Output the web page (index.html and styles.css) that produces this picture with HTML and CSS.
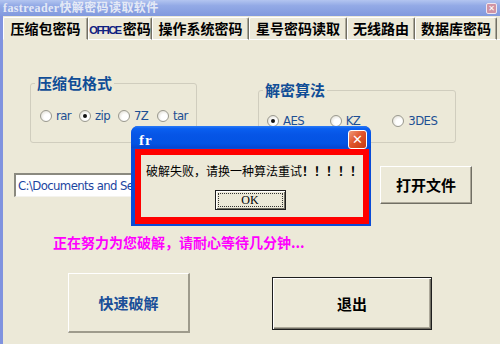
FILE: index.html
```html
<!DOCTYPE html>
<html>
<head>
<meta charset="utf-8">
<title>fastreader</title>
<link rel="stylesheet" href="styles.css">
</head>
<body>
<div class="window">
  <div class="titlebar">
    <span class="title">fastreader快解密码读取软件</span>
    <span class="tclose">✕</span>
  </div>
  <div class="frame">
    <div class="tabs">
      <div class="tab tab-1 active">压缩包密码</div>
      <div class="tab tab-2"><span class="office">OFFICE</span>密码</div>
      <div class="tab tab-3">操作系统密码</div>
      <div class="tab tab-4">星号密码读取</div>
      <div class="tab tab-5">无线路由</div>
      <div class="tab tab-6">数据库密码</div>
      <div class="tab-fill"></div>
    </div>
    <div class="panel">
      <div class="row-groups">
        <fieldset class="group group-format">
          <legend>压缩包格式</legend>
          <div class="radios">
            <label class="radio fmt"><span class="dot"></span><span class="rl">rar</span></label>
            <label class="radio fmt"><span class="dot on"></span><span class="rl">zip</span></label>
            <label class="radio fmt"><span class="dot"></span><span class="rl">7Z</span></label>
            <label class="radio fmt"><span class="dot"></span><span class="rl">tar</span></label>
          </div>
        </fieldset>
        <fieldset class="group group-algo">
          <legend>解密算法</legend>
          <div class="radios">
            <label class="radio alg"><span class="dot on"></span><span class="rl">AES</span></label>
            <label class="radio alg"><span class="dot"></span><span class="rl">KZ</span></label>
            <label class="radio alg"><span class="dot"></span><span class="rl">3DES</span></label>
          </div>
        </fieldset>
      </div>
      <div class="row-file">
        <div class="path">C:\Documents and Settings</div>
        <button class="btn btn-open">打开文件</button>
      </div>
      <div class="status">正在努力为您破解，请耐心等待几分钟...</div>
      <div class="row-actions">
        <button class="btn btn-crack">快速破解</button>
        <button class="btn btn-exit">退出</button>
      </div>
    </div>
  </div>

  <div class="dialog">
    <div class="dlg-title">
      <span class="dlg-name">fr</span>
      <span class="dlg-close">✕</span>
    </div>
    <div class="dlg-body">
      <div class="dlg-frame">
        <div class="dlg-msg">破解失败，请换一种算法重试<span class="bang">！！！！！</span></div>
        <div class="dlg-actions">
          <button class="ok"><span class="ok-focus">OK</span></button>
        </div>
      </div>
    </div>
  </div>
</div>
</body>
</html>
```

FILE: styles.css
```css
* { box-sizing: border-box; }

body {
  margin: 0;
  width: 500px;
  height: 344px;
  overflow: hidden;
  background: #ece9d8;
  font-family: "Noto Sans CJK SC", "Liberation Sans", sans-serif;
}

.window {
  position: relative;
  width: 500px;
  height: 344px;
  display: flex;
  flex-direction: column;
}

/* main title bar (inactive XP style) */
.titlebar {
  height: 16px;
  flex: none;
  display: flex;
  align-items: center;
  padding-left: 3px;
  background: linear-gradient(#b3c5f0, #93aae6 35%, #8199de);
}
.title {
  font: bold 12px/16px "Liberation Serif", "Noto Sans CJK SC", serif;
  color: #e4e9f6;
  letter-spacing: 0.4px;
}
.tclose {
  margin-left: auto;
  margin-right: 3px;
  width: 11px;
  height: 11px;
  border: 1px solid #f1e6ee;
  border-radius: 2px;
  background: #cf93a4;
  color: #fff;
  font: bold 8px/9px "DejaVu Sans", sans-serif;
  text-align: center;
}

.frame {
  flex: 1;
  display: flex;
  flex-direction: column;
  border-left: 3px solid #8093df;
}

/* tabs */
.tabs {
  display: flex;
  height: 24px;
  flex: none;
  padding-top: 1px;
}
.tab {
  height: 23px;
  border-top: 1px solid #fff;
  border-left: 1px solid #fff;
  border-right: 1px solid #716f64;
  border-bottom: 1px solid #fff;
  box-shadow: inset -1px 0 #aca899;
  border-radius: 2px 2px 0 0;
  font: bold 14px/21px "Noto Sans CJK SC", sans-serif;
  color: #000;
  text-align: center;
  white-space: nowrap;
  overflow: hidden;
}
.tab.active { border-bottom-color: #ece9d8; }
.tab-1 { width: 85px; }
.tab-2 { width: 64px; }
.tab-3 { width: 97px; }
.tab-4 { width: 98px; }
.tab-5 { width: 68px; }
.tab-6 { width: 82px; }
.tab-fill { flex: 1; border-bottom: 1px solid #fff; }
.office {
  font: bold 11px/21px "Liberation Sans", sans-serif;
  letter-spacing: -1.5px;
  margin-right: 2px;
  color: #102080;
}

.panel {
  flex: 1;
  background: #ece9d8;
}

/* radio groups */
.row-groups {
  display: flex;
  align-items: flex-start;
  margin-top: 36px;
  padding-left: 27px;
  gap: 61px;
}
.group {
  margin: 0;
  padding: 0;
  border: 1px solid #d0cdbe;
  border-radius: 3px;
  min-inline-size: 0;
}
.group legend {
  margin-left: 4px;
  padding: 0 2px;
  font: bold 15px/14px "Noto Sans CJK SC", sans-serif;
  color: #104d96;
}
.group-format { width: 167px; height: 67px; }
.group-algo { width: 198px; height: 60px; margin-top: 7px; }
.group-format .radios { padding: 19px 0 0 9px; }
.group-algo .radios { padding: 17px 0 0 8px; }
.radios { display: flex; align-items: center; }
.radio {
  display: flex;
  align-items: center;
  height: 13px;
}
.fmt { width: 39px; }
.alg { width: 63px; }
.dot {
  width: 12px;
  height: 12px;
  border-radius: 50%;
  border: 1px solid #9a998f;
  background: radial-gradient(circle at 62% 62%, #ffffff 35%, #dedbd0 90%);
  position: relative;
  flex: none;
}
.dot.on::after {
  content: "";
  position: absolute;
  left: 3px;
  top: 3px;
  width: 4px;
  height: 4px;
  border-radius: 50%;
  background: #111;
}
.rl {
  margin-left: 4px;
  font: 13px/13px "DejaVu Sans", "Liberation Sans", sans-serif;
  font-stretch: condensed;
  letter-spacing: -0.6px;
  color: #1c4f93;
}

/* file row */
.row-file {
  display: flex;
  align-items: flex-start;
  margin-top: 23px;
  padding-left: 11px;
}
.path {
  margin-top: 7px;
  width: 300px;
  height: 24px;
  background: #fff;
  border-top: 2px solid #8a897f;
  border-left: 2px solid #8a897f;
  border-bottom: 1px solid #f4f3ee;
  border-right: 1px solid #f4f3ee;
  padding-left: 2px;
  font: 13px/21px "DejaVu Sans", "Liberation Sans", sans-serif;
  font-stretch: condensed;
  letter-spacing: -0.6px;
  color: #1c45a0;
  white-space: nowrap;
  overflow: hidden;
}

.btn {
  background: #ece9d8;
  border-top: 1px solid #fff;
  border-left: 1px solid #fff;
  border-right: 1px solid #716f64;
  border-bottom: 1px solid #716f64;
  box-shadow: inset -1px -1px #aca899;
  font: bold 15px/20px "Noto Sans CJK SC", sans-serif;
  color: #000;
  padding: 0;
}
.btn-open {
  margin-left: 66px;
  width: 92px;
  height: 38px;
}

.status {
  margin-top: 29px;
  padding-left: 50px;
  font: bold 14px/18px "Noto Sans CJK SC", sans-serif;
  color: #ff00ff;
  white-space: nowrap;
}

.row-actions {
  display: flex;
  align-items: flex-start;
  margin-top: 22px;
  padding-left: 65px;
}
.btn-crack {
  width: 122px;
  height: 60px;
  color: #1a4f98;
  border-right-width: 2px;
  border-bottom-width: 2px;
  border-right-color: #9e9b8c;
  border-bottom-color: #9e9b8c;
  box-shadow: none;
}
.btn-exit {
  margin-left: 82px;
  margin-top: 4px;
  width: 160px;
  height: 53px;
  border: 1px solid #1e1e1e;
  box-shadow: inset 1px 1px #fff, inset -1px -1px #716f64, inset -2px -2px #aca899;
}

/* message dialog */
.dialog {
  position: absolute;
  left: 131px;
  top: 126px;
  width: 240px;
  height: 100px;
  display: flex;
  flex-direction: column;
  border-radius: 7px 7px 0 0;
  overflow: hidden;
  background: #0a4bd6;
}
.dlg-title {
  height: 22px;
  flex: none;
  display: flex;
  align-items: center;
  padding-left: 8px;
  padding-right: 4px;
  background: linear-gradient(#2a7af5 0%, #0a5ff0 12%, #0655e6 40%, #0353e3 80%, #0546cf 100%);
}
.dlg-name {
  font: bold 15px/20px "Liberation Serif", serif;
  color: #fff;
  letter-spacing: 1px;
  margin-top: 6px;
}
.dlg-close {
  margin-left: auto;
  margin-top: 4px;
  width: 19px;
  height: 19px;
  border: 1px solid #fff;
  border-radius: 3px;
  background: linear-gradient(135deg, #f09a7a, #e0552c 45%, #c43a12);
  color: #fff;
  font: bold 13px/17px "DejaVu Sans", sans-serif;
  text-align: center;
}
.dlg-body {
  flex: 1;
  padding: 1px 2px 2px 4px;
  display: flex;
}
.dlg-frame {
  flex: 1;
  border: 6px solid #ff0000;
  border-bottom-width: 7px;
  background: #ece9d8;
  display: flex;
  flex-direction: column;
}
.dlg-msg {
  padding: 9px 0 0 5px;
  font: 12px/14px "Noto Sans CJK SC", sans-serif;
  color: #000;
  white-space: nowrap;
}
.bang { font-weight: bold; }
.dlg-actions {
  display: flex;
  justify-content: center;
  padding-top: 12px;
  padding-right: 4px;
}
.ok {
  width: 71px;
  height: 20px;
  padding: 2px;
  background: #ece9d8;
  border: 1px solid #1e1e1e;
  box-shadow: inset 1px 1px #fff, inset -1px -1px #716f64;
  display: flex;
}
.ok-focus {
  flex: 1;
  border: 1px dotted #333;
  font: 12px/12px "Liberation Serif", serif;
  color: #000;
  text-align: center;
}
```
